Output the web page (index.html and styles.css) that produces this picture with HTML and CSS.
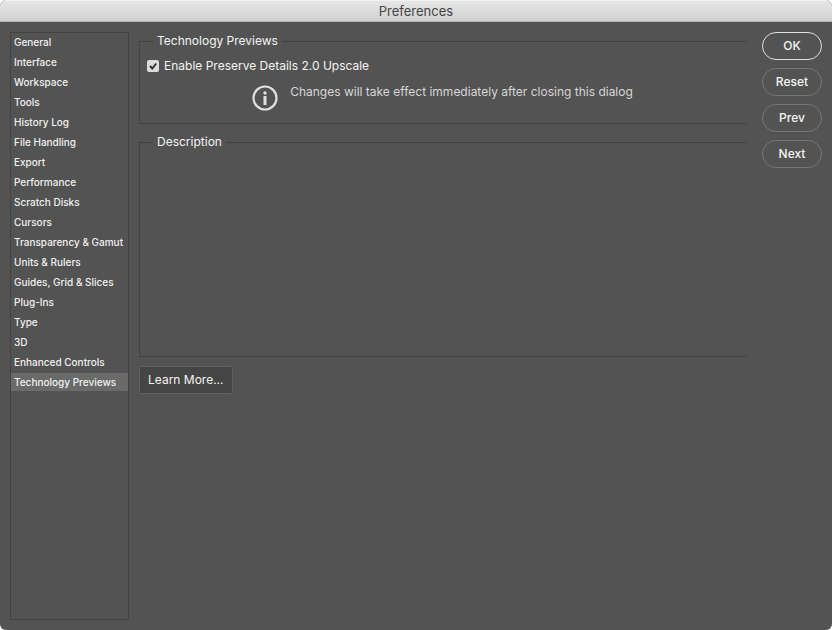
FILE: index.html
```html
<!DOCTYPE html>
<html lang="en">
<head>
<meta charset="utf-8">
<title>Preferences</title>
<link rel="stylesheet" href="styles.css">
</head>
<body>
<div class="window">
  <header class="titlebar"><h1>Preferences</h1></header>
  <div class="content">
    <nav class="sidebar" aria-label="Preference sections">
      <a href="#">General</a>
      <a href="#">Interface</a>
      <a href="#">Workspace</a>
      <a href="#">Tools</a>
      <a href="#">History Log</a>
      <a href="#">File Handling</a>
      <a href="#">Export</a>
      <a href="#">Performance</a>
      <a href="#">Scratch Disks</a>
      <a href="#">Cursors</a>
      <a href="#">Transparency &amp; Gamut</a>
      <a href="#">Units &amp; Rulers</a>
      <a href="#">Guides, Grid &amp; Slices</a>
      <a href="#">Plug-Ins</a>
      <a href="#">Type</a>
      <a href="#">3D</a>
      <a href="#">Enhanced Controls</a>
      <a href="#" class="selected" aria-current="page">Technology Previews</a>
    </nav>
    <main class="panel">
      <fieldset class="group">
        <legend>Technology Previews</legend>
        <div class="option">
          <input type="checkbox" id="upscale" checked>
          <label for="upscale">Enable Preserve Details 2.0 Upscale</label>
        </div>
        <div class="notice">
          <svg class="info" viewBox="0 0 26 26" aria-hidden="true">
            <circle cx="13" cy="13" r="11.5" fill="none" stroke="#e0e0e0" stroke-width="2.2"/>
            <circle cx="13" cy="8" r="1.7" fill="#e0e0e0"/>
            <path d="M11.500 11h3v9h-3z" fill="#e0e0e0"/>
          </svg>
          <p>Changes will take effect immediately after closing this dialog</p>
        </div>
      </fieldset>
      <fieldset class="group description">
        <legend>Description</legend>
      </fieldset>
      <button type="button" class="learn">Learn More...</button>
    </main>
    <div class="actions">
      <button type="button" class="pill primary">OK</button>
      <button type="button" class="pill">Reset</button>
      <button type="button" class="pill">Prev</button>
      <button type="button" class="pill">Next</button>
    </div>
  </div>
</div>
</body>
</html>
```
FILE: styles.css
```css
* {
  box-sizing: border-box;
}

body {
  margin: 0;
  background: #fff;
  color: #f4f4f4;
  font: 12px/16px Inter, "Liberation Sans", sans-serif;
}

button {
  font: inherit;
  color: inherit;
}

.window {
  display: flex;
  flex-direction: column;
  min-height: 100vh;
  border-radius: 6px;
  overflow: hidden;
  background: #535353;
}

.titlebar {
  height: 22px;
  border-top: 1px solid #f2f2f2;
  border-bottom: 1px solid #b4b4b4;
  background: linear-gradient(#e6e6e6, #d1d1d1);
  color: #454545;
  text-align: center;
}

.titlebar h1 {
  margin: 0;
  font-size: 13px;
  font-weight: 400;
  line-height: 20px;
}

.content {
  flex: 1;
  display: flex;
  align-items: stretch;
  padding: 10px;
}

.sidebar {
  flex: none;
  width: 119px;
  border: 1px solid #424242;
}

.sidebar a {
  display: block;
  margin-bottom: 2px;
  padding-left: 3px;
  font-size: 10px;
  font-weight: 500;
  line-height: 18px;
  color: #f0f0f0;
  text-decoration: none;
  white-space: nowrap;
}

.sidebar .selected {
  background: #6a6a6a;
}

.panel {
  flex: 1;
  padding: 1px 16px 0 10px;
}

.group {
  margin: 0 0 10px;
  padding: 9px 0 12px 7px;
  border: 1px solid #424242;
  border-right: 0;
  min-width: 0;
}

.group legend {
  margin-left: 6px;
  padding: 0 4px;
}

.option {
  display: flex;
  align-items: center;
  gap: 5px;
}

.option input {
  appearance: none;
  width: 12px;
  height: 12px;
  margin: 0;
  border-radius: 2px;
  background: #dcdcdc url("data:image/svg+xml,%3Csvg xmlns='http://www.w3.org/2000/svg' viewBox='0 0 12 12'%3E%3Cpath d='M3 6l2.300 2.500L9.200 3.500' fill='none' stroke='%23333' stroke-width='2'/%3E%3C/svg%3E");
}

.notice {
  display: flex;
  justify-content: center;
  gap: 12px;
  padding: 10px 8px 0 0;
  color: #d6d6d6;
}

.notice p {
  margin: 0;
}

.info {
  width: 26px;
  height: 26px;
  margin-top: 1px;
}

.description {
  height: 223px;
  margin-bottom: 9px;
}

.learn {
  display: block;
  height: 28px;
  padding: 0 8px;
  border: 1px solid #606060;
  border-radius: 2px;
  background: #454545;
}

.actions {
  flex: none;
  width: 60px;
  display: flex;
  flex-direction: column;
  gap: 8px;
}

.pill {
  height: 28px;
  padding: 0;
  border: 1px solid #777;
  border-radius: 14px;
  background: transparent;
  font-weight: 500;
}

.primary {
  border-color: #e0e0e0;
}
```
